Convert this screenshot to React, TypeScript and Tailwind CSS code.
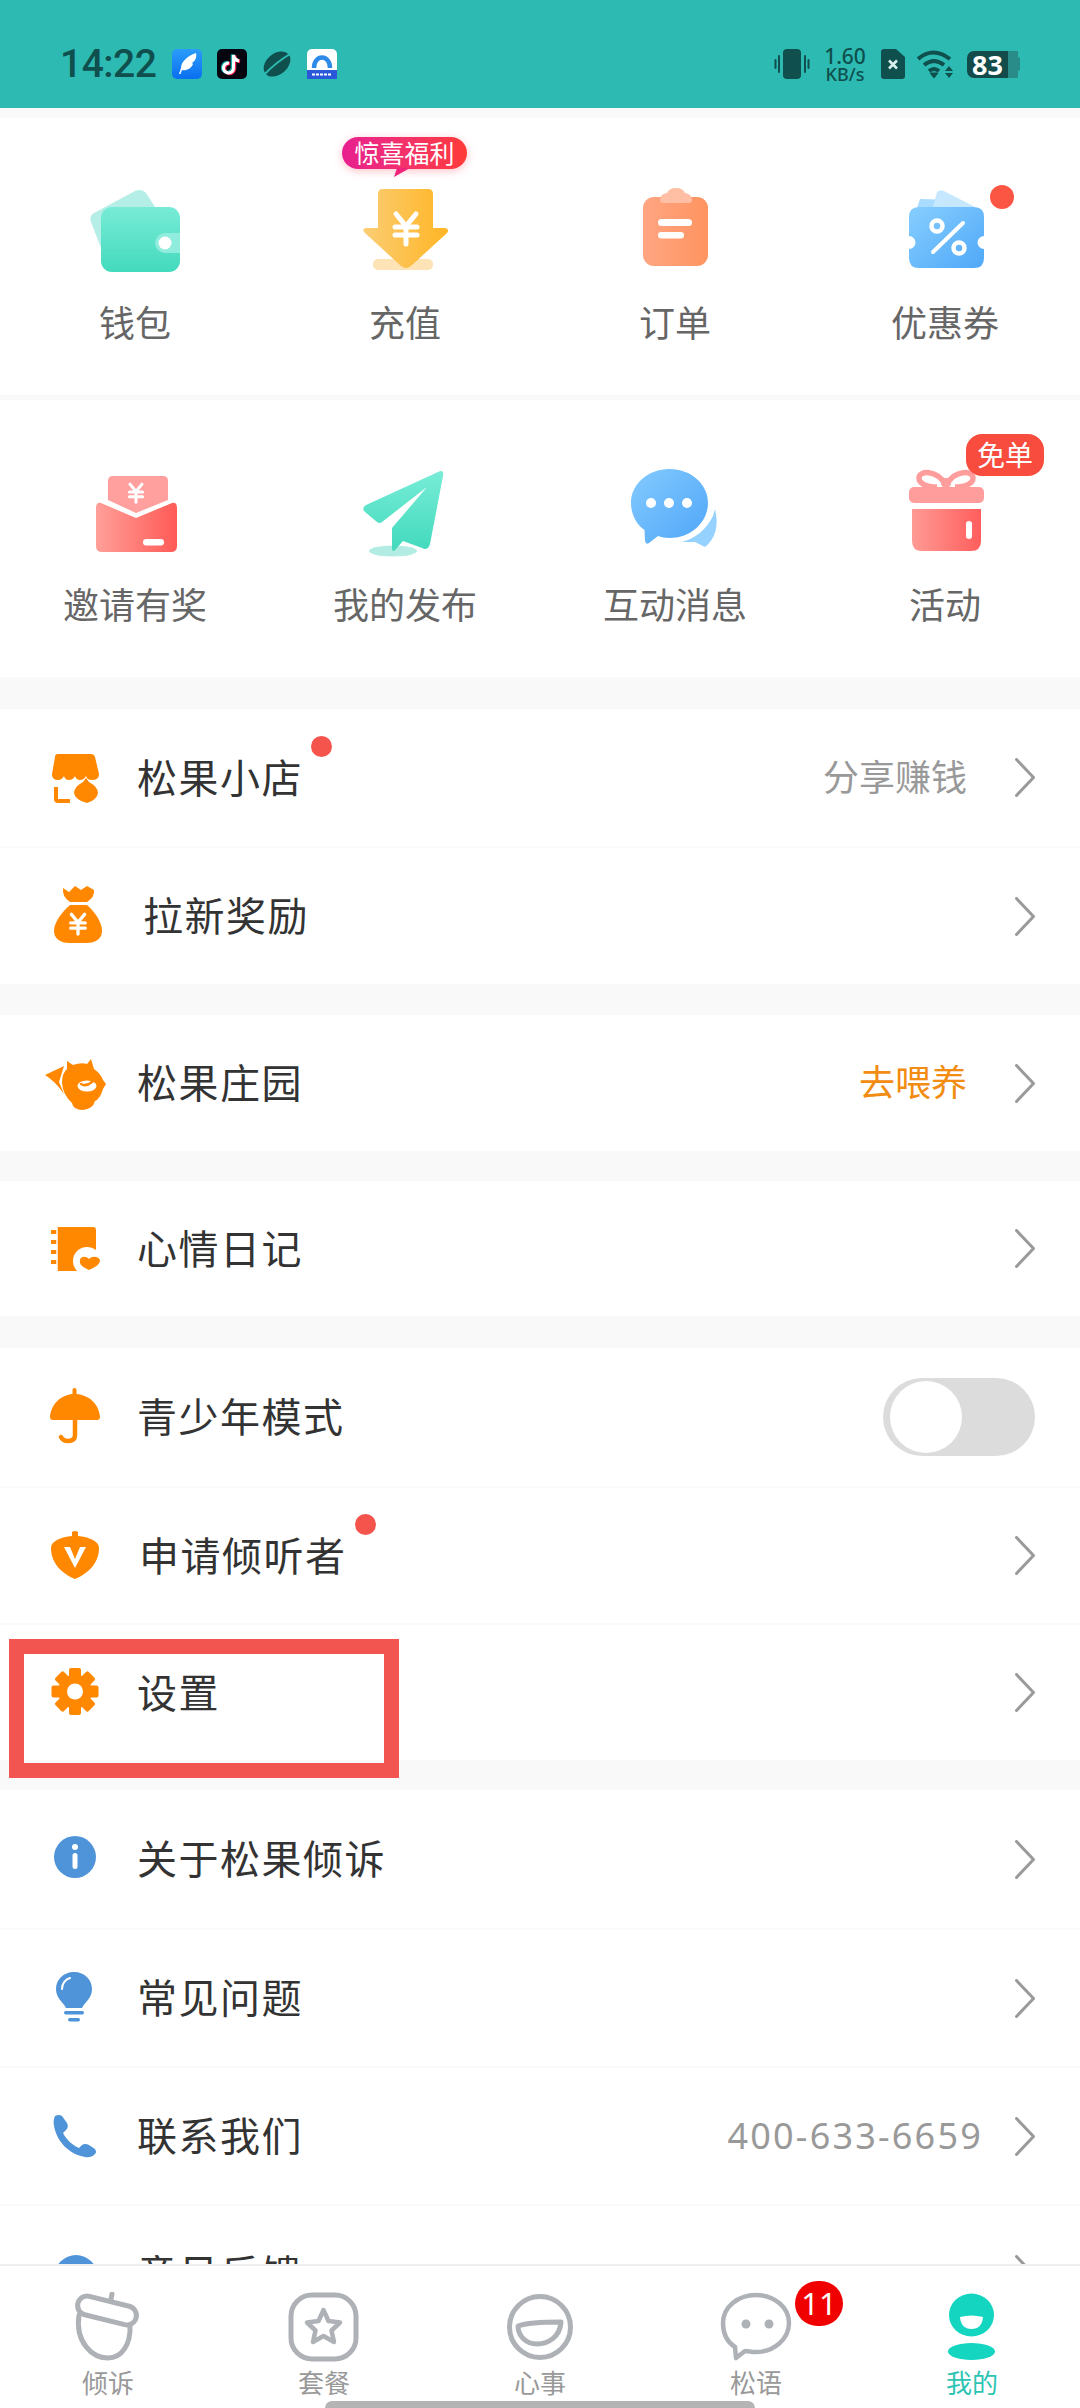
import React from "react";

const Yen = ({ cx, top, s = 1, color = "#fff" }: { cx: number; top: number; s?: number; color?: string }) => (
  <g transform={`translate(${cx} ${top}) scale(${s})`} stroke={color} strokeWidth={5} strokeLinecap="round" fill="none">
    <path d="M-10 2 L0 14 L10 2" />
    <path d="M-11 15 H11 M-11 23 H11 M0 14 V32" />
  </g>
);

const Grad = ({ id, a, b, vertical = false, diag = false }: { id: string; a: string; b: string; vertical?: boolean; diag?: boolean }) => (
  <linearGradient id={id} x1="0" y1="0" x2={vertical ? "0" : "1"} y2={vertical || diag ? "1" : "0"}>
    <stop offset="0" stopColor={a} />
    <stop offset="1" stopColor={b} />
  </linearGradient>
);

const Box = ({ children }: { children: React.ReactNode }) => (
  <svg width="100" height="100" viewBox="0 0 100 100" className="block shrink-0">
    {children}
  </svg>
);

const Wallet = () => (
  <Box>
    <defs><Grad id="wal" a="#78ebd6" b="#43dabd" vertical /></defs>
    <path d="M9 33 L50 11 Q57 8 61 13 L72 30 L20 78 L6 42 Q4 36 9 33 Z" fill="#b5eee6" />
    <rect x="16" y="27" width="79" height="65" rx="11" fill="url(#wal)" />
    <path d="M95 53 H80 A10 10 0 0 0 80 73 H95 Z" fill="#90ecdd" />
    <circle cx="80" cy="63" r="6.5" fill="#fff" />
  </Box>
);

const Arrow = () => (
  <Box>
    <defs><Grad id="arr" a="#fbcd74" b="#ffb524" /></defs>
    <rect x="18" y="79" width="60" height="11" rx="5" fill="#fde3b6" />
    <path d="M28 9 H73 Q78 9 78 14 V48 H90 Q95 49 92 53 L56 86 Q51 90 46 86 L10 53 Q6 49 11 48 H23 V14 Q23 9 28 9 Z" fill="url(#arr)" />
    <Yen cx={51} top={32} />
  </Box>
);

const Clip = () => (
  <Box>
    <defs><Grad id="cli" a="#ffa582" b="#ff9460" /></defs>
    <rect x="18" y="17" width="65" height="69" rx="11" fill="url(#cli)" />
    <path d="M42 13 Q44 8 51 8 Q58 8 60 13 Q67 14 67 20 Q67 23 63 23 H39 Q35 23 35 20 Q35 14 42 13 Z" fill="#ffbfa4" />
    <rect x="33" y="39" width="34" height="7" rx="3.5" fill="#fff" />
    <rect x="33" y="52" width="26" height="6.5" rx="3.2" fill="#fff" />
  </Box>
);

const Coupon = () => (
  <Box>
    <defs><Grad id="cou" a="#87ceff" b="#4fa8f8" diag /></defs>
    <path d="M25 19 L60 20 L80 28 H22 Z" fill="#a9dcff" />
    <path d="M42 12 Q45 9 49 11 L80 27 H38 Z" fill="#c6e8ff" />
    <path d="M24 27 H79 Q89 27 89 37 V56 A6.5 6.5 0 0 0 89 69 V78 Q89 88 79 88 H24 Q14 88 14 78 V69 A6.5 6.5 0 0 0 14 56 V37 Q14 27 24 27 Z" fill="url(#cou)" />
    <circle cx="42" cy="46" r="5.5" fill="none" stroke="#fff" strokeWidth="4.5" />
    <circle cx="64" cy="68" r="5.5" fill="none" stroke="#fff" strokeWidth="4.5" />
    <path d="M68 43 L38 72" stroke="#fff" strokeWidth="4" strokeLinecap="round" />
  </Box>
);

const Envelope = () => (
  <Box>
    <defs><Grad id="env" a="#ff9f99" b="#ff5a56" /></defs>
    <path d="M28 14 H78 Q83 14 83 19 V38 L51 51 L23 38 V19 Q23 14 28 14 Z" fill="#ffa09e" />
    <path d="M16 41 L51 56 L87 41 Q92 40 92 46 V84 Q92 90 86 90 H17 Q11 90 11 84 V46 Q11 40 16 41 Z" fill="url(#env)" />
    <Yen cx={51} top={21} s={0.6} />
    <rect x="58" y="77" width="21" height="6.5" rx="3.2" fill="#fff" />
  </Box>
);

const Plane = () => (
  <Box>
    <defs><Grad id="pla" a="#78ecd7" b="#42dabd" vertical /></defs>
    <ellipse cx="38" cy="89" rx="24" ry="5.5" fill="#b2ece2" />
    <path d="M83 10 Q89 7 88 14 L75 82 Q73 89 67 86 L48 79 L40 88 Q37 91 37 86 V66 L72 25 L27 60 Q25 62 22 60 L10 50 Q6 46 11 43 Z" fill="url(#pla)" />
  </Box>
);

const Chat = () => (
  <Box>
    <defs><Grad id="cha" a="#84caff" b="#4fa6f9" diag /></defs>
    <path d="M90 47 Q96 72 80 85 L78 84 L70 80 Q64 80 57 80 Q78 74 88 54 Z" fill="#95d2ff" />
    <path d="M44.5 7 C66 7 83 22 83 41 C83 60 66 76 44.5 76 C40 76 36 75 33 74 L24 81 Q21 83 20 79 L19.500 68 C11 62 6 52 6 41 C6 22 23 7 44.5 7 Z" fill="url(#cha)" />
    <circle cx="26" cy="41" r="5" fill="#fff" />
    <circle cx="44" cy="41" r="5" fill="#fff" />
    <circle cx="62" cy="41" r="5" fill="#fff" />
  </Box>
);

const Gift = () => (
  <Box>
    <defs><Grad id="gif" a="#ff9a94" b="#ff5e5c" /></defs>
    <path d="M50 22 C42 8 24 8 24 16 C24 22 32 25 42 25 M52 22 C60 8 78 8 78 16 C78 22 70 25 60 25" fill="none" stroke="#ff9d9c" strokeWidth="5.5" />
    <circle cx="51" cy="21" r="5" fill="#ff9d9c" />
    <rect x="14" y="25" width="75" height="16" rx="5" fill="#ff9d9c" />
    <path d="M17 47 H86 V79 Q86 89 76 89 H27 Q17 89 17 79 Z" fill="url(#gif)" />
    <rect x="71" y="59" width="6" height="18" rx="3" fill="#fff" />
  </Box>
);

const OR = "#ff8800";
const BL = "#4f94d8";

const Shop = () => (
  <Box>
    <path d="M33 26 H66 Q69 26 70 29 L74 46 Q74 52 67 52 Q62 52 61 48 Q59 52 55 52 Q51 52 50 48 Q48 52 44 52 Q40 52 39 48 Q37 52 33 52 Q27 52 27 46 L30 29 Q30 26 33 26 Z" fill={OR} />
    <path d="M31 59 V71 Q31 73 33 73 H45" fill="none" stroke={OR} strokeWidth="4" />
    <path d="M61 50 L64 54 Q73 59 73 65 Q72 72 62 75 Q50 72 49 65 Q49 59 58 54 Z" fill={OR} />
  </Box>
);

const Bag = () => (
  <Box>
    <path d="M38 22 L44 26 L50 20 L56 24 L62 20 L69 24 Q70 31 62 36 H45 Q37 31 38 22 Z" fill={OR} />
    <path d="M45 39 H62 C70 46 77 56 77 65 C77 73 70 77 62 77 H44 C36 77 29 73 29 65 C29 56 37 46 45 39 Z" fill={OR} />
    <Yen cx={53} top={47} s={0.66} />
  </Box>
);

const Fox = () => (
  <Box>
    <path d="M20 42 L39 33 L34 49 L39 61 Q30 48 20 42 Z" fill={OR} />
    <path d="M42 28 L48 32 Q56 29 62 31 L66 26 L69 36 Q76 41 78 47 L81 51 L78 56 Q75 66 70 68 Q68 76 58 77 Q48 77 47 70 Q38 62 37 50 Q37 40 42 36 Z" fill={OR} />
    <ellipse cx="62" cy="53" rx="9.500" ry="5.500" fill="#fff" />
    <path d="M56 51 Q61 54 67 49" fill="none" stroke={OR} strokeWidth="2.500" strokeLinecap="round" />
  </Box>
);

const Diary = () => (
  <Box>
    <path d="M32 28 H68 Q71 28 71 31 V60 L56 72 H32 Z" fill={OR} />
    <path d="M26 33 H38 M26 43 H38 M26 53 H38 M26 63 H38" stroke={OR} strokeWidth="4" />
    <path d="M32 28 V72" stroke="#fff" strokeWidth="1.5" />
    <circle cx="62" cy="62" r="14" fill="#fff" />
    <path d="M64 71 C57 68 54 65 55 61 C56 57 61 57 64 60 C67 57 73 57 75 61 C75 65 71 68 64 71 Z" fill={OR} />
  </Box>
);

const Umbrella = () => (
  <Box>
    <path d="M47.500 27 V23 Q47.500 21 49.500 21 Q51.500 21 51.500 23 V27 C64 28 74 37 75 50 Q75 53 72 53 H28 Q25 53 25 50 C26 37 36 28 47.500 27 Z" fill={OR} />
    <path d="M50 52 V68 Q50 74 43 74 Q38 74 36 70" fill="none" stroke={OR} strokeWidth="4.500" strokeLinecap="round" />
  </Box>
);

const Acorn = () => (
  <Box>
    <path d="M47 26 Q50 24 53 26 V30 C64 31 74 35 74 42 C74 58 62 68 50 73 C38 68 26 58 26 42 C26 35 36 31 47 30 Z" fill={OR} />
    <path d="M39 41 L50 62 L61 41 L55 41 L50 53 L45 41 Z" fill="#fff" />
  </Box>
);

const Gear = () => (
  <Box>
    {[0, 45, 90, 135].map((r) => (
      <rect key={r} x="44" y="25" width="12" height="47" rx="2" fill={OR} transform={`rotate(${r} 50 48.500)`} />
    ))}
    <circle cx="50" cy="48.500" r="17" fill={OR} />
    <circle cx="50" cy="48.500" r="8" fill="#fff" />
  </Box>
);

const Info = () => (
  <Box>
    <circle cx="50" cy="48" r="21" fill={BL} />
    <circle cx="50" cy="38" r="3" fill="#fff" />
    <rect x="47.500" y="44" width="5" height="16" rx="2.500" fill="#fff" />
  </Box>
);

const Bulb = () => (
  <Box>
    <path d="M49 24 C60 24 67 32 67 41 C67 50 60 54 57 60 H41 C38 54 31 50 31 41 C31 32 38 24 49 24 Z" fill={BL} />
    <path d="M37 41 C37 35 41 31 45 30" fill="none" stroke="#fff" strokeWidth="2" strokeLinecap="round" />
    <rect x="39" y="63" width="20" height="3.500" rx="1.700" fill={BL} />
    <rect x="43" y="70" width="12" height="3.500" rx="1.700" fill={BL} />
  </Box>
);

const Phone = () => (
  <Box>
    <path d="M30 30 Q34 28 37 30 L42 37 Q44 41 41 44 L38 47 C41 53 47 59 54 62 L57 59 Q60 57 64 59 L70 63 Q72 66 70 68 Q66 72 60 71 C44 68 32 56 29 40 Q28 34 30 30 Z" fill={BL} />
  </Box>
);

const Feedback = () => (
  <Box>
    <circle cx="51" cy="52.500" r="21.500" fill={BL} />
  </Box>
);

const Chevron = () => (
  <svg width="20" height="39" viewBox="0 0 20 39" className="block shrink-0">
    <path d="M1.500 1.500 L18.500 19.500 L1.500 37.500" fill="none" stroke="#9a9a9a" strokeWidth="3" strokeLinecap="round" strokeLinejoin="round" />
  </svg>
);

const Row = ({ icon, label, right, rightClass = "text-[#999]", textClass = "ml-[12px]", dot, first, h = "h-[138px]", tail }: {
  icon: React.ReactNode; label: string; right?: string; rightClass?: string; textClass?: string; dot?: boolean; first?: boolean; h?: string; tail?: React.ReactNode;
}) => (
  <div className={`flex ${h} shrink-0 items-center bg-white pl-[25px] pr-[45px] ${first ? "" : "border-t-2 border-[#fafafa]"}`}>
    {icon}
    <span className={`relative ${textClass} text-[40px] leading-[48px] tracking-[1.500px] text-[#333]`}>
      {label}
      {dot && <span className="absolute left-full top-[-18px] ml-[8px] h-[21px] w-[21px] rounded-full bg-[#f4544c]" />}
    </span>
    <div className="ml-auto flex items-center">
      {right && <span className={`text-[36px] leading-[48px] ${rightClass}`}>{right}</span>}
      {tail ?? <span className="ml-[48px]"><Chevron /></span>}
    </div>
  </div>
);

const Cell = ({ icon, label, children }: { icon: React.ReactNode; label: string; children?: React.ReactNode }) => (
  <div className="relative flex flex-col items-center pt-[62px]">
    {icon}
    <span className="mt-[20px] text-[36px] leading-[48px] text-[#666]">{label}</span>
    {children}
  </div>
);

const Tab = ({ icon, label, color = "text-[#999]", children }: { icon: React.ReactNode; label: string; color?: string; children?: React.ReactNode }) => (
  <div className="relative flex flex-col items-center pt-[26px]">
    {icon}
    <span className={`mt-[4px] text-[26px] leading-[34px] ${color}`}>{label}</span>
    {children}
  </div>
);

const TS = "#aeb2b7";
const TabSvg = ({ children }: { children: React.ReactNode }) => (
  <svg width="72" height="70" viewBox="0 0 72 70" className="block" fill="none" stroke={TS} strokeWidth="5" strokeLinecap="round" strokeLinejoin="round">
    {children}
  </svg>
);

export default function App() {
  return (
    <div className="relative flex h-[2408px] w-[1080px] flex-col overflow-hidden bg-white font-['Noto_Sans','Noto_Sans_CJK_SC',sans-serif]">
      {/* status bar */}
      <div className="flex h-[108px] shrink-0 items-center justify-between bg-[#2cbab2] pl-[60px] pr-[60px] pt-[20px] text-[#0f4f4d]">
        <div className="flex items-center">
          <span className="w-[112px] font-['Roboto',sans-serif] text-[39px] font-medium leading-[40px] tracking-[-0.5px]">14:22</span>
          <div className="flex items-center gap-[15px]">
            <svg width="30" height="30" viewBox="0 0 30 30" className="block">
              <defs><Grad id="fea" a="#2b9dfb" b="#0a6ff0" vertical /></defs>
              <rect width="30" height="30" rx="5" fill="url(#fea)" />
              <path d="M7 25 L9 19 C9 13 15 7 24 4 C25 9 23 12 20 14 L21 15 C19 20 14 22 10 21 L8.500 25 Z" fill="#fff" />
            </svg>
            <svg width="30" height="30" viewBox="0 0 30 30" className="block">
              <rect width="30" height="30" rx="5" fill="#05050f" />
              <path d="M12 14 A5 5 0 1 0 16.500 19 V6 Q17 11 22 12" fill="none" stroke="#ff2c55" strokeWidth="3.500" transform="translate(1 .5)" />
              <path d="M12 14 A5 5 0 1 0 16.500 19 V6 Q17 11 22 12" fill="none" stroke="#25f4ee" strokeWidth="3.500" transform="translate(-1 -.5)" opacity=".7" />
              <path d="M12 14 A5 5 0 1 0 16.500 19 V6 Q17 11 22 12" fill="none" stroke="#fff" strokeWidth="3" />
            </svg>
            <svg width="30" height="30" viewBox="0 0 30 30" className="block">
              <ellipse cx="15" cy="15" rx="15" ry="10.500" transform="rotate(-40 15 15)" fill="#0f4f4d" />
              <path d="M2 26 Q13 14 28 5" stroke="#2cbab2" strokeWidth="2" fill="none" />
            </svg>
            <svg width="30" height="30" viewBox="0 0 30 30" className="block">
              <rect width="30" height="30" rx="5" fill="#fff" />
              <path d="M7 19 C7 5 23 5 23 19" fill="none" stroke="#2d8ae8" strokeWidth="4.500" />
              <rect y="21" width="30" height="9" fill="#2b58d8" />
              <path d="M5 25.500 H25" stroke="#fff" strokeWidth="2" strokeDasharray="3 1" />
            </svg>
          </div>
        </div>
        <div className="flex items-center">
          <svg width="36" height="30" viewBox="0 0 36 30" className="block">
            <rect x="9" y="0" width="18" height="30" rx="4" fill="#0f4f4d" />
            <path d="M1.500 11 V19 M5 7 V23 M31 7 V23 M34.500 11 V19" stroke="#0f4f4d" strokeWidth="2" strokeLinecap="round" />
          </svg>
          <div className="ml-[12px] flex w-[46px] flex-col items-center font-['Noto_Sans',sans-serif] font-medium">
            <span className="text-[21px] leading-[20px]">1.60</span>
            <span className="text-[18px] leading-[17px]">KB/s</span>
          </div>
          <svg width="24" height="30" viewBox="0 0 24 30" className="ml-[13px] block">
            <path d="M3 0 H15 L24 8 V27 Q24 30 21 30 H3 Q0 30 0 27 V3 Q0 0 3 0 Z" fill="#0f4f4d" />
            <path d="M8 11.500 L16 19.500 M16 11.500 L8 19.500" stroke="#d8efed" strokeWidth="2.500" />
          </svg>
          <svg width="38" height="30" viewBox="0 0 38 30" className="ml-[12px] block" fill="none" stroke="#0f4f4d" strokeWidth="4">
            <path d="M1 10 Q16 -3 33 10" />
            <path d="M7 16 Q17 8 27 16" />
            <path d="M12 22 Q17 18 22 22" />
            <path d="M13 24 L17 29 L21 24 Z" fill="#0f4f4d" strokeWidth="1" />
            <path d="M32 17 L36 22 H28 Z M28 24 H36 L32 29 Z" fill="#0f4f4d" stroke="none" />
          </svg>
          <div className="ml-[12px] flex h-[27px] w-[53px] items-center">
            <div className="flex h-full w-[41px] items-center justify-center rounded-l-[7px] bg-[#134a4a] font-['Noto_Sans',sans-serif] text-[27px] font-bold leading-none text-white">83</div>
            <div className="h-full w-[10px] bg-[#2a8c88]" />
            <div className="h-[14px] w-[2px] rounded-r bg-[#2a8c88]" />
          </div>
        </div>
      </div>

      <div className="flex min-h-0 flex-1 flex-col overflow-hidden bg-[#f9f9f9] pt-[10px]">
        <div className="grid h-[277px] shrink-0 grid-cols-4 bg-white">
          <Cell icon={<Wallet />} label="钱包" />
          <Cell icon={<Arrow />} label="充值">
            <div className="absolute left-[72px] top-[19px] flex h-[32px] w-[125px] items-center justify-center rounded-full bg-gradient-to-r from-[#e81e8f] to-[#ff3a36] text-[25px] leading-[32px] text-white shadow-[0_2px_8px_rgba(255,80,100,0.35)]">
              惊喜福利
              <svg width="16" height="9" viewBox="0 0 16 9" className="absolute left-[52px] top-[31px] block">
                <path d="M3 0 H16 L0 9 Z" fill="#ee2379" />
              </svg>
            </div>
          </Cell>
          <Cell icon={<Clip />} label="订单" />
          <Cell icon={<Coupon />} label="优惠券">
            <span className="absolute left-[180px] top-[67px] h-[24px] w-[24px] rounded-full bg-[#fb5644]" />
          </Cell>
        </div>

        <div className="mt-[5px] grid h-[277px] shrink-0 grid-cols-4 bg-white">
          <Cell icon={<Envelope />} label="邀请有奖" />
          <Cell icon={<Plane />} label="我的发布" />
          <Cell icon={<Chat />} label="互动消息" />
          <Cell icon={<Gift />} label="活动">
            <span className="absolute left-[156px] top-[34px] flex h-[42px] w-[78px] items-center justify-center rounded-[16px] bg-[#f84c3e] text-[28px] leading-none text-white">免单</span>
          </Cell>
        </div>

        <div className="mt-[32px] flex shrink-0 flex-col">
          <Row first h="h-[137px]" icon={<Shop />} label="松果小店" dot right="分享赚钱" />
          <Row icon={<Bag />} label="拉新奖励" textClass="ml-[18px]" />
        </div>
        <div className="mt-[31px] flex shrink-0 flex-col">
          <Row first h="h-[136px]" icon={<Fox />} label="松果庄园" right="去喂养" rightClass="text-[#f28c12]" />
        </div>
        <div className="mt-[30px] flex shrink-0 flex-col">
          <Row first h="h-[135px]" icon={<Diary />} label="心情日记" />
        </div>
        <div className="mt-[32px] flex shrink-0 flex-col">
          <Row first icon={<Umbrella />} label="青少年模式" tail={
            <span className="flex h-[78px] w-[152px] items-center rounded-full bg-[#dcdcdc] pl-[7px]">
              <span className="h-[72px] w-[72px] rounded-full bg-white" />
            </span>
          } />
          <Row h="h-[137px]" icon={<Acorn />} label="申请倾听者" textClass="ml-[14px]" dot />
          <Row h="h-[137px]" icon={<Gear />} label="设置" />
        </div>
        <div className="mt-[30px] flex shrink-0 flex-col">
          <Row first icon={<Info />} label="关于松果倾诉" />
          <Row icon={<Bulb />} label="常见问题" />
          <Row icon={<Phone />} label="联系我们" right="400-633-6659" rightClass="text-[#999] tracking-[2.200px]" tail={<span className="ml-[32px]"><Chevron /></span>} />
          <Row icon={<Feedback />} label="意见反馈" />
        </div>
      </div>

      {/* tab bar */}
      <div className="grid h-[144px] shrink-0 grid-cols-5 border-t-2 border-[#eeeeee] bg-white">
        <Tab label="倾诉" icon={
          <TabSvg>
            <rect x="5" y="9" width="60" height="19" rx="9.500" transform="rotate(14 35 18.500)" />
            <path d="M7 23 C3 50 20 66 36 66 C50 66 59 52 58 33" />
            <path d="M40 2 L39 7" />
          </TabSvg>
        } />
        <Tab label="套餐" icon={
          <TabSvg>
            <rect x="3" y="3" width="65" height="64" rx="21" />
            <path d="M35.500 18 L40.500 29 L52 30.500 L43.500 38.500 L46 50 L35.500 44 L25 50 L27.500 38.500 L19 30.500 L30.500 29 Z" strokeWidth="4.500" />
          </TabSvg>
        } />
        <Tab label="心事" icon={
          <TabSvg>
            <circle cx="36" cy="35" r="30.500" />
            <path d="M14 34 C25 30 45 30 57 30 C56 45 44 52 33 52 C22 52 14 44 14 34 Z" />
          </TabSvg>
        } />
        <Tab label="松语" icon={
          <TabSvg>
            <path d="M36 3 C54 3 69 15 69 31 C69 47 54 60 36 60 C32 60 28 59 25 59 L16 66 L15 55 C7 50 3 41 3 31 C3 15 18 3 36 3 Z" strokeWidth="4.500" />
            <circle cx="26" cy="32" r="4.500" fill={TS} stroke="none" />
            <circle cx="49" cy="32" r="4.500" fill={TS} stroke="none" />
          </TabSvg>
        }>
          <span className="absolute left-[147px] top-[15px] flex h-[45px] w-[48px] items-center justify-center rounded-full bg-[#f00000] text-[31px] leading-none text-white">11</span>
        </Tab>
        <Tab label="我的" color="text-[#2dc4b4]" icon={
          <svg width="72" height="70" viewBox="0 0 72 70" className="block">
            <ellipse cx="35.500" cy="23" rx="22.500" ry="21.500" fill="#14d6c0" />
            <path d="M24 25 Q35.500 22 47 25 Q46 37 35.500 37 Q25 37 24 25 Z" fill="#fff" />
            <ellipse cx="35.500" cy="59.500" rx="23.500" ry="8.500" fill="#14d6c0" />
          </svg>
        } />
      </div>

      {/* annotation frame over the settings row */}
      <div className="absolute left-[9px] top-[1639px] h-[139px] w-[390px] border-[15px] border-[#f2544f]" />
      {/* gesture bar */}
      <div className="absolute bottom-0 left-[325px] h-[7px] w-[430px] rounded-t-full bg-[#b4b4b4]" />
    </div>
  );
}
